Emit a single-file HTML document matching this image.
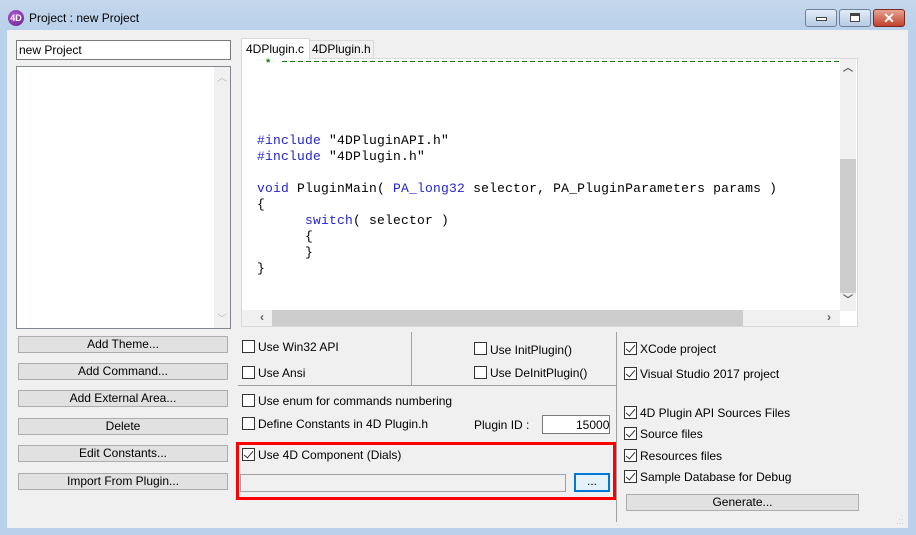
<!DOCTYPE html>
<html><head><meta charset="utf-8"><style>
*{box-sizing:border-box;margin:0;padding:0}
body{width:916px;height:535px;overflow:hidden;background:#b9d1ea;font-family:"Liberation Sans",sans-serif;font-size:12px;color:#000;position:relative}
.a{position:absolute}
.title{left:0;top:0;width:916px;height:30px;background:linear-gradient(#c4d7ec,#b9d1ea)}
.client{left:7px;top:30px;width:901px;height:498px;background:#f0f0f0}
.btn{position:absolute;background:#e1e1e1;border:1px solid #adadad;text-align:center;line-height:15px;height:17px}
.cb{position:absolute;width:13px;height:13px;border:1px solid #333;background:#fff}
.cb.on::after{content:"";position:absolute;left:3px;top:0px;width:4px;height:8px;border:solid #333;border-width:0 1px 1px 0;transform:rotate(40deg)}
.lbl{position:absolute;white-space:nowrap;line-height:14px}
.code{position:absolute;font-family:"Liberation Mono",monospace;font-size:13px;letter-spacing:0.2px;line-height:16px;white-space:pre}
.k{color:#2323d6}
.t{color:#2323d6}
</style></head><body>
<div class="a title"></div>
<div class="a" style="left:8px;top:10px;width:16px;height:16px;border-radius:50%;background:radial-gradient(circle at 40% 35%,#b25ad0,#6a1a8c);color:#fff;font-size:9px;font-weight:bold;line-height:16px;text-align:center">4D</div>
<div class="lbl" style="left:29px;top:11px;font-size:12px">Project : new Project</div>
<div class="a" style="left:805px;top:9px;width:32px;height:18px;border:1px solid #6d7f99;border-radius:3px;background:linear-gradient(#e2ecf7,#b6cbe3)"><div class="a" style="left:10px;top:7px;width:11px;height:4px;background:#fff;border:1px solid #444"></div></div>
<div class="a" style="left:839px;top:9px;width:32px;height:18px;border:1px solid #6d7f99;border-radius:3px;background:linear-gradient(#e2ecf7,#b6cbe3)"><div class="a" style="left:10px;top:3px;width:10px;height:9px;background:#fff;border:1px solid #444;border-top-width:3px"></div></div>
<div class="a" style="left:873px;top:9px;width:32px;height:18px;border:1px solid #7a2a22;border-radius:3px;background:linear-gradient(#e8a493,#c0422c);color:#fff;font-weight:bold;font-size:14px;text-align:center;line-height:16px">✕</div>
<div class="a client"></div>

<div class="a" style="left:16px;top:40px;width:215px;height:20px;background:#fff;border:1px solid #7a7a7a"></div>
<div class="lbl" style="left:19px;top:43px">new Project</div>
<div class="a" style="left:16px;top:66px;width:215px;height:263px;background:#fff;border:1px solid #828790"></div>
<div class="a" style="left:214px;top:67px;width:16px;height:261px;background:#f0f0f0"></div>
<div class="lbl" style="left:217px;top:72px;color:#bbb;font-size:10px">︿</div>
<div class="lbl" style="left:217px;top:313px;color:#bbb;font-size:10px">﹀</div>

<div class="a" style="left:241px;top:58px;width:617px;height:269px;background:#fff;border:1px solid #d9d9d9"></div>
<div class="a" style="left:309px;top:40px;width:65px;height:19px;background:#f0f0f0;border:1px solid #d9d9d9"></div>
<div class="lbl" style="left:312px;top:42px">4DPlugin.h</div>
<div class="a" style="left:241px;top:38px;width:69px;height:22px;background:#fff;border:1px solid #d9d9d9;border-bottom:none"></div>
<div class="lbl" style="left:246px;top:42px">4DPlugin.c</div>
<div class="a" style="left:282px;top:61px;width:557px;height:1px;background:repeating-linear-gradient(90deg,#118011 0 5px,transparent 5px 8px)"></div>
<div class="lbl" style="left:266px;top:56px;color:#118011;font-size:11px;font-weight:bold">*</div>
<div class="a" style="left:840px;top:59px;width:16px;height:252px;background:#f0f0f0"></div>
<div class="a" style="left:840px;top:159px;width:16px;height:134px;background:#cdcdcd"></div>
<div class="lbl" style="left:843px;top:62px;color:#606060;font-size:10px;font-weight:bold">︿</div>
<div class="lbl" style="left:843px;top:294px;color:#606060;font-size:10px;font-weight:bold">﹀</div>
<div class="a" style="left:242px;top:310px;width:598px;height:16px;background:#f0f0f0"></div>
<div class="a" style="left:272px;top:310px;width:471px;height:16px;background:#cdcdcd"></div>
<div class="lbl" style="left:260px;top:310px;color:#606060;font-weight:bold">‹</div>
<div class="lbl" style="left:827px;top:310px;color:#606060;font-weight:bold">›</div>
<div class="code" style="left:257px;top:133px"><span class="k">#include</span> "4DPluginAPI.h"
<span class="k">#include</span> "4DPlugin.h"

<span class="k">void</span> PluginMain( <span class="t">PA_long32</span> selector, PA_PluginParameters params )
{
      <span class="k">switch</span>( selector )
      {
      }
}</div>

<div class="btn" style="left:18px;top:336px;width:210px">Add Theme...</div>
<div class="btn" style="left:18px;top:363px;width:210px">Add Command...</div>
<div class="btn" style="left:18px;top:390px;width:210px">Add External Area...</div>
<div class="btn" style="left:18px;top:418px;width:210px">Delete</div>
<div class="btn" style="left:18px;top:445px;width:210px">Edit Constants...</div>
<div class="btn" style="left:18px;top:473px;width:210px">Import From Plugin...</div>

<div class="a" style="left:411px;top:332px;width:1px;height:53px;background:#a0a0a0"></div>
<div class="a" style="left:238px;top:385px;width:378px;height:1px;background:#a0a0a0"></div>
<div class="a" style="left:616px;top:332px;width:1px;height:190px;background:#a0a0a0"></div>

<div class="cb" style="left:242px;top:340px"></div><div class="lbl" style="left:258px;top:340px">Use Win32 API</div>
<div class="cb" style="left:242px;top:366px"></div><div class="lbl" style="left:258px;top:366px">Use Ansi</div>
<div class="cb" style="left:474px;top:342px"></div><div class="lbl" style="left:490px;top:343px">Use InitPlugin()</div>
<div class="cb" style="left:474px;top:366px"></div><div class="lbl" style="left:490px;top:366px">Use DeInitPlugin()</div>
<div class="cb" style="left:242px;top:394px"></div><div class="lbl" style="left:258px;top:394px">Use enum for commands numbering</div>
<div class="cb" style="left:242px;top:417px"></div><div class="lbl" style="left:258px;top:417px">Define Constants in 4D Plugin.h</div>
<div class="lbl" style="left:474px;top:418px">Plugin ID :</div>
<div class="a" style="left:542px;top:415px;width:68px;height:19px;background:#fff;border:1px solid #7a7a7a"></div>
<div class="lbl" style="left:576px;top:418px">15000</div>

<div class="a" style="left:236px;top:442px;width:380px;height:58px;border:3px solid #f00"></div>
<div class="cb on" style="left:242px;top:448px"></div><div class="lbl" style="left:258px;top:448px">Use 4D Component (Dials)</div>
<div class="a" style="left:240px;top:474px;width:326px;height:18px;background:#f0f0f0;border:1px solid #a0a0a0"></div>
<div class="a" style="left:574px;top:473px;width:36px;height:19px;background:#e5f1fb;border:2px solid #0078d7;text-align:center;line-height:13px">...</div>

<div class="cb on" style="left:624px;top:342px"></div><div class="lbl" style="left:640px;top:342px">XCode project</div>
<div class="cb on" style="left:624px;top:367px"></div><div class="lbl" style="left:640px;top:367px">Visual Studio 2017 project</div>
<div class="cb on" style="left:624px;top:406px"></div><div class="lbl" style="left:640px;top:406px">4D Plugin API Sources Files</div>
<div class="cb on" style="left:624px;top:427px"></div><div class="lbl" style="left:640px;top:427px">Source files</div>
<div class="cb on" style="left:624px;top:449px"></div><div class="lbl" style="left:640px;top:449px">Resources files</div>
<div class="cb on" style="left:624px;top:470px"></div><div class="lbl" style="left:640px;top:470px">Sample Database for Debug</div>
<div class="btn" style="left:626px;top:494px;width:233px">Generate...</div>
<div class="lbl" style="left:896px;top:514px;color:#bbb;font-size:8px;line-height:4px">&nbsp;&nbsp;·<br>&nbsp;··<br>···</div>
</body></html>
